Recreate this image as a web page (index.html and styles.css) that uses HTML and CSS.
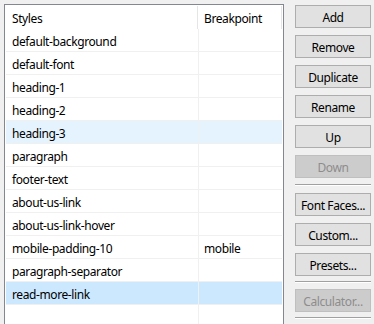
FILE: index.html
```html
<!DOCTYPE html>
<html lang="en">

<head>
    <meta charset="UTF-8">
    <title>Styles</title>
    <link rel="stylesheet" href="styles.css">
</head>

<body>

    <div class="window">
        <div class="list">
            <div class="list-head">
                <div class="head-cell name">Styles</div>
                <div class="head-cell bp">Breakpoint</div>
            </div>
            <div class="list-body">
                <div class="row"><div class="cell name">default-background</div><div class="cell bp"></div></div>
                <div class="row"><div class="cell name">default-font</div><div class="cell bp"></div></div>
                <div class="row"><div class="cell name">heading-1</div><div class="cell bp"></div></div>
                <div class="row"><div class="cell name">heading-2</div><div class="cell bp"></div></div>
                <div class="row hover"><div class="cell name">heading-3</div><div class="cell bp"></div></div>
                <div class="row"><div class="cell name">paragraph</div><div class="cell bp"></div></div>
                <div class="row"><div class="cell name">footer-text</div><div class="cell bp"></div></div>
                <div class="row"><div class="cell name">about-us-link</div><div class="cell bp"></div></div>
                <div class="row"><div class="cell name">about-us-link-hover</div><div class="cell bp"></div></div>
                <div class="row"><div class="cell name">mobile-padding-10</div><div class="cell bp">mobile</div></div>
                <div class="row"><div class="cell name">paragraph-separator</div><div class="cell bp"></div></div>
                <div class="row selected"><div class="cell name">read-more-link</div><div class="cell bp"></div></div>
                <div class="row"><div class="cell name"></div><div class="cell bp"></div></div>
            </div>
        </div>

        <div class="actions">
            <button class="btn">Add</button>
            <button class="btn">Remove</button>
            <button class="btn">Duplicate</button>
            <button class="btn">Rename</button>
            <button class="btn">Up</button>
            <button class="btn" disabled>Down</button>
            <div class="sep"></div>
            <button class="btn">Font Faces...</button>
            <button class="btn">Custom...</button>
            <button class="btn">Presets...</button>
            <div class="sep sep-tight"></div>
            <button class="btn" disabled>Calculator...</button>
            <div class="sep sep-tight"></div>
        </div>
    </div>

</body>

</html>
```

FILE: styles.css
```css
* {
    margin: 0;
    padding: 0;
    box-sizing: border-box;
}

body {
    font-family: 'Noto Sans', sans-serif;
    font-size: 12px;
    letter-spacing: -0.4px;
    color: #000;
    background: #f0f0f0;
    overflow: hidden;
}

.window {
    display: flex;
    align-items: flex-start;
    gap: 11px;
    padding: 4px 0 0 4px;
    height: 324px;
}

/* LIST ======================================= */
.list {
    width: 280px;
    height: 330px;
    background: #fff;
    border: 1px solid #828790;
    border-bottom: none;
    padding-left: 1px;
}

.list-head {
    display: flex;
    height: 24px;
}

.head-cell {
    line-height: 20px;
    padding: 3px 0 0 6px;
    border-right: 1px solid #e5e5e5;
    margin-top: 1px;
}

.head-cell.name {
    width: 192px;
}

.head-cell.bp {
    width: 84px;
}

.row {
    display: flex;
    height: 23px;
}

.cell {
    line-height: 19px;
    padding-top: 3px;
    border-bottom: 1px solid #f0f0f0;
    white-space: nowrap;
}

.cell.name {
    width: 193px;
    padding-left: 6px;
    border-right: 1px solid #f0f0f0;
}

.cell.bp {
    width: 83px;
    padding-left: 5px;
}

.row.hover .cell {
    background: #e5f3ff;
}

.row.selected .cell {
    background: #cce8ff;
}

/* BUTTONS ===================================== */
.actions {
    display: flex;
    flex-direction: column;
    gap: 7px;
    width: 76px;
    padding-top: 1px;
}

.btn {
    height: 23px;
    width: 76px;
    font-family: inherit;
    font-size: 12px;
    letter-spacing: -0.4px;
    padding-top: 1px;
    color: #000;
    background: #e1e1e1;
    border: 1px solid #adadad;
}

.btn:disabled {
    color: #8d8d8d;
    background: #cccccc;
    border-color: #bfbfbf;
}

.sep {
    height: 2px;
    border-top: 1px solid #a0a0a0;
    border-bottom: 1px solid #fff;
    margin: -1px 0 0;
}

.sep-tight {
    margin: -2px 0 -1px;
}
```
